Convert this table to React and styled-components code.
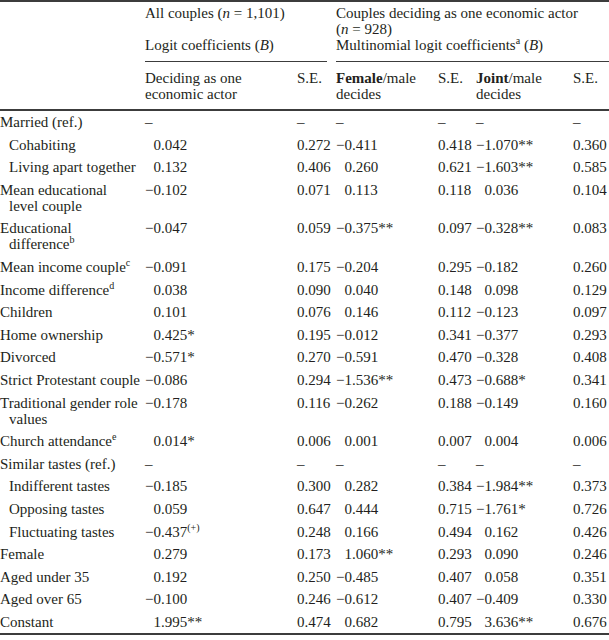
import React from "react";
import styled, { createGlobalStyle } from "styled-components";

const GlobalStyle = createGlobalStyle`
  body {
    margin: 0;
    background: #fff;
  }
`;

const Table = styled.table`
  width: 609px;
  table-layout: fixed;
  border-collapse: separate;
  border-spacing: 0;
  font-family: "Liberation Serif", "Times New Roman", serif;
  font-size: 15px;
  line-height: 16px;
  color: #231f20;
  border-top: 2px solid #3c3c3c;
  border-bottom: 2px solid #3c3c3c;
`;

const Col = styled.col`
  width: ${(p) => p.$w}px;
`;

const HeadCell = styled.th`
  text-align: left;
  font-weight: normal;
  vertical-align: top;
  padding: ${(p) => p.$pt || 0}px ${(p) => p.$pr || 0}px ${(p) => p.$pb || 0}px 0;
  border-bottom: ${(p) => (p.$rule ? "2px solid #3c3c3c" : "none")};
`;

const GroupRule = styled.div`
  padding-bottom: 8px;
  margin-right: ${(p) => p.$gap || 0}px;
  border-bottom: 1px solid #3c3c3c;
`;

const NoWrap = styled.span`
  white-space: nowrap;
`;

const Cell = styled.td`
  vertical-align: top;
  white-space: nowrap;
  padding: 3px 0 3.6px 0;
`;

const Line = styled.span`
  display: block;
  padding-left: ${(p) => (p.$indent ? 9 : 0)}px;
`;

const Sup = styled.sup`
  font-size: 10px;
  line-height: 0;
  vertical-align: 6px;
`;

const Ghost = styled.span`
  visibility: hidden;
`;

const rows = [
  { label: ["Married (ref.)"], v: ["–", "–", "–", "–", "–", "–"] },
  { label: ["Cohabiting"], indent: true, v: ["0.042", "0.272", "−0.411", "0.418", "−1.070**", "0.360"] },
  { label: ["Living apart together"], indent: true, v: ["0.132", "0.406", "0.260", "0.621", "−1.603**", "0.585"] },
  { label: ["Mean educational", "level couple"], v: ["−0.102", "0.071", "0.113", "0.118", "0.036", "0.104"] },
  { label: ["Educational", "difference"], sup: "b", v: ["−0.047", "0.059", "−0.375**", "0.097", "−0.328**", "0.083"] },
  { label: ["Mean income couple"], sup: "c", v: ["−0.091", "0.175", "−0.204", "0.295", "−0.182", "0.260"] },
  { label: ["Income difference"], sup: "d", v: ["0.038", "0.090", "0.040", "0.148", "0.098", "0.129"] },
  { label: ["Children"], v: ["0.101", "0.076", "0.146", "0.112", "−0.123", "0.097"] },
  { label: ["Home ownership"], v: ["0.425*", "0.195", "−0.012", "0.341", "−0.377", "0.293"] },
  { label: ["Divorced"], v: ["−0.571*", "0.270", "−0.591", "0.470", "−0.328", "0.408"] },
  { label: ["Strict Protestant couple"], v: ["−0.086", "0.294", "−1.536**", "0.473", "−0.688*", "0.341"] },
  { label: ["Traditional gender role", "values"], v: ["−0.178", "0.116", "−0.262", "0.188", "−0.149", "0.160"] },
  { label: ["Church attendance"], sup: "e", v: ["0.014*", "0.006", "0.001", "0.007", "0.004", "0.006"] },
  { label: ["Similar tastes (ref.)"], v: ["–", "–", "–", "–", "–", "–"] },
  { label: ["Indifferent tastes"], indent: true, v: ["−0.185", "0.300", "0.282", "0.384", "−1.984**", "0.373"] },
  { label: ["Opposing tastes"], indent: true, v: ["0.059", "0.647", "0.444", "0.715", "−1.761*", "0.726"] },
  { label: ["Fluctuating tastes"], indent: true, v: ["−0.437(+)", "0.248", "0.166", "0.494", "0.162", "0.426"] },
  { label: ["Female"], v: ["0.279", "0.173", "1.060**", "0.293", "0.090", "0.246"] },
  { label: ["Aged under 35"], v: ["0.192", "0.250", "−0.485", "0.407", "0.058", "0.351"] },
  { label: ["Aged over 65"], v: ["−0.100", "0.246", "−0.612", "0.407", "−0.409", "0.330"] },
  { label: ["Constant"], v: ["1.995**", "0.474", "0.682", "0.795", "3.636**", "0.676"] },
];

// coefficient: pad positives with a hidden minus so decimals line up
function Coef({ value }) {
  if (value === "–") return value;
  let text = value;
  let sup = null;
  if (text.endsWith("(+)")) {
    text = text.slice(0, -3);
    sup = <Sup>(+)</Sup>;
  }
  return (
    <>
      {!text.startsWith("−") && <Ghost>−</Ghost>}
      {text}
      {sup}
    </>
  );
}

function Label({ row }) {
  return row.label.map((line, i) => (
    <Line key={i} $indent={row.indent || i > 0}>
      {line}
      {i === row.label.length - 1 && row.sup && <Sup>{row.sup}</Sup>}
    </Line>
  ));
}

export default function App() {
  return (
    <>
      <GlobalStyle />
      <Table>
        <colgroup>
          <Col $w={145} />
          <Col $w={152} />
          <Col $w={39} />
          <Col $w={102} />
          <Col $w={38} />
          <Col $w={97} />
          <Col $w={36} />
        </colgroup>
        <thead>
          <tr>
            <HeadCell rowSpan={3} $rule />
            <HeadCell colSpan={2} $pt={3}>
              All couples <NoWrap>(<i>n</i> = 1,101)</NoWrap>
            </HeadCell>
            <HeadCell colSpan={4} $pt={3}>
              Couples deciding as one economic actor
              <br />
              <NoWrap>(<i>n</i> = 928)</NoWrap>
            </HeadCell>
          </tr>
          <tr>
            <HeadCell colSpan={2}>
              <GroupRule $gap={9}>
                Logit coefficients (<i>B</i>)
              </GroupRule>
            </HeadCell>
            <HeadCell colSpan={4}>
              <GroupRule>
                Multinomial logit coefficients<Sup>a</Sup> (<i>B</i>)
              </GroupRule>
            </HeadCell>
          </tr>
          <tr>
            <HeadCell $pt={8} $pb={7} $pr={10} $rule>
              Deciding as one
              <br />
              economic actor
            </HeadCell>
            <HeadCell $pt={8} $pb={7} $rule>
              S.E.
            </HeadCell>
            <HeadCell $pt={8} $pb={7} $pr={8} $rule>
              <b>Female</b>/male
              <br />
              decides
            </HeadCell>
            <HeadCell $pt={8} $pb={7} $rule>
              S.E.
            </HeadCell>
            <HeadCell $pt={8} $pb={7} $pr={8} $rule>
              <b>Joint</b>/male
              <br />
              decides
            </HeadCell>
            <HeadCell $pt={8} $pb={7} $rule>
              S.E.
            </HeadCell>
          </tr>
        </thead>
        <tbody>
          {rows.map((row, i) => (
            <tr key={i}>
              <Cell>
                <Label row={row} />
              </Cell>
              {row.v.map((val, j) => (
                <Cell key={j}>{j % 2 === 0 ? <Coef value={val} /> : val}</Cell>
              ))}
            </tr>
          ))}
        </tbody>
      </Table>
    </>
  );
}
